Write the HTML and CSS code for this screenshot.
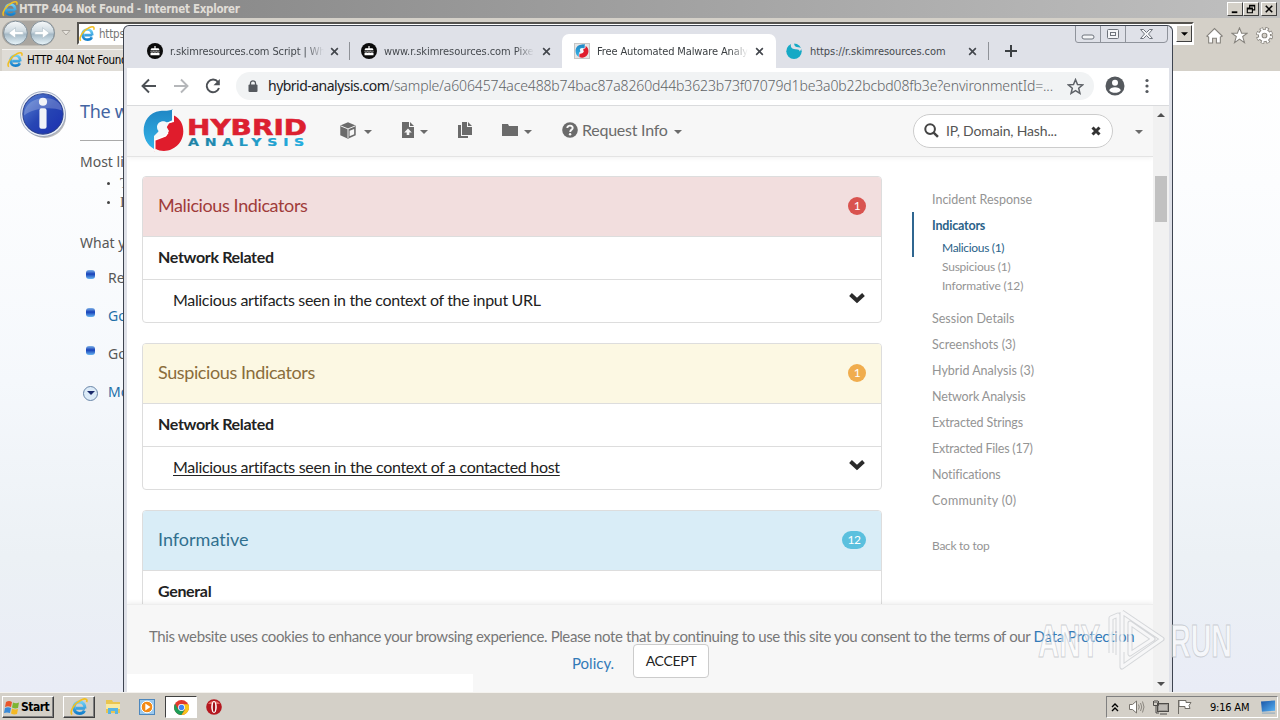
FILE: index.html
```html
<!DOCTYPE html>
<html lang="en">
<head>
<meta charset="utf-8">
<title>Desktop</title>
<link rel="stylesheet" href="styles.css">
</head>
<body>
<svg class="defs" aria-hidden="true">
  <defs>
    <linearGradient id="ieBlue" x1="0" y1="0" x2="0" y2="1"><stop offset="0" stop-color="#6fd0f7"/><stop offset="1" stop-color="#1480cc"/></linearGradient>
    <linearGradient id="orb" x1="0" y1="0" x2="0" y2="1"><stop offset="0" stop-color="#f7f9fa"/><stop offset=".45" stop-color="#cdd9e0"/><stop offset=".55" stop-color="#a5b9c6"/><stop offset="1" stop-color="#eaf6fb"/></linearGradient>
    <linearGradient id="info" x1="0" y1="0" x2="1" y2="1"><stop offset="0" stop-color="#5c86d6"/><stop offset=".5" stop-color="#2746b4"/><stop offset="1" stop-color="#1a2fb0"/></linearGradient>
    <linearGradient id="haBlue" x1="0" y1="0" x2="0" y2="1"><stop offset="0" stop-color="#1f86c4"/><stop offset="1" stop-color="#35b4e8"/></linearGradient>
    <linearGradient id="haText" x1="0" y1="0" x2="1" y2="0"><stop offset="0" stop-color="#1f7fa0"/><stop offset="1" stop-color="#22b4ea"/></linearGradient>
    <linearGradient id="screen" x1="0" y1="0" x2="1" y2="1"><stop offset="0" stop-color="#1753a5"/><stop offset="1" stop-color="#58b2f4"/></linearGradient>
    <symbol id="ie" viewBox="0 0 16 16">
      <path d="M13.3 9.2H5.2M13.3 9.2C13.4 5.700 11.500 3.500 8.500 3.500S3.600 5.800 3.600 8.700s2 5 4.900 5c2.200 0 3.600-.9 4.300-2.500" fill="none" stroke="url(#ieBlue)" stroke-width="2.700"/>
      <path d="M1.800 14.800C-.6 12.200 3.500 4.600 10.400 1.500c3.600-1.500 5.400-.5 4.300 2.200" fill="none" stroke="#f2bf22" stroke-width="1.500"/>
    </symbol>
    <symbol id="cake" viewBox="0 0 16 16">
      <circle cx="8" cy="8" r="8" fill="#0b0b0b"/>
      <path d="M7.400 3h1.200v2.200h2.200q1.500 0 1.500 1.400v.6H3.700v-.6q0-1.400 1.500-1.400h2.200zM3.500 9.700h9v2.600h-9z" fill="#fff"/>
      <path d="M3.500 8.400c1.300.9 2.200.7 3 0 .8.700 2.200.7 3 0 .8.700 1.800.9 3 0" fill="none" stroke="#fff" stroke-width=".7"/>
    </symbol>
    <symbol id="globe" viewBox="0 0 41 43">
      <path d="M29.500.3V12L20 15l-5 8-4 4v13C-5 31-2 4 17 2c5-.6 9 .5 12.500-1.700z" fill="url(#haBlue)"/>
      <path d="M31 6.500C43.500 12 44 33 29 40c-6 3-12 2.300-16.500-.3l-1 3V31L23 27l3-5-4-7 9-2z" fill="#e01c2c"/>
      <path d="M29.800 1v11l-7 3M25 23.500l-2.500 3.500-10.700 4V42" fill="none" stroke="#fff" stroke-width="1.400"/>
      <path d="M22 12.500c-4-1-8 1.500-8 5.500 0 3 1.500 4 3 5l-3 5 8-1.500 3-4-1.500-4 2.500-4z" fill="#f4f8fb"/>
    </symbol>
    <symbol id="x" viewBox="0 0 10 10"><path d="M1.300 1.300l7.400 7.400m0-7.400L1.300 8.700" stroke="#43474d" stroke-width="1.800"/></symbol>
    <symbol id="caret" viewBox="0 0 8 4"><path d="M0 0h8L4 4z" fill="currentColor"/></symbol>
    <symbol id="chev" viewBox="0 0 16 12"><path d="M1.500 2.500L8 8.500l6.500-6" fill="none" stroke="#2b2b2b" stroke-width="4"/></symbol>
  </defs>
</svg>
<div class="desktop">
  <section class="ie">
    <header class="ie-title">
      <svg class="i16"><use href="#ie"/></svg><span class="ie-name">HTTP 404 Not Found - Internet Explorer</span>
      <div class="classic-btns">
        <svg viewBox="0 0 15 13"><path d="M4 10h6" stroke="#000" stroke-width="2"/></svg>
        <svg viewBox="0 0 15 13"><path d="M6 5V2.500h5.500v5H9M3.500 5.500H9v5H3.500zM3.500 6.500H9M6 3.200h5" fill="none" stroke="#000" stroke-width="1.200"/></svg>
        <svg class="gap" viewBox="0 0 15 13"><path d="M4 3l7 7m0-7l-7 7" stroke="#000" stroke-width="1.700"/></svg>
      </div>
    </header>
    <div class="ie-nav">
      <svg class="orbs" viewBox="0 0 58 28"><rect x="1" y="1" width="55" height="26" rx="13" fill="#aaa6a0"/><circle cx="15" cy="14" r="12.300" fill="url(#orb)" stroke="#7f8d96"/><circle cx="43" cy="14" r="12.300" fill="url(#orb)" stroke="#7f8d96"/><path d="M23 12.500h-8V8.500L8 14l7 5.500v-4h8zM35 12.500h8V8.500l7 5.500-7 5.500v-4h-8z" fill="#fff" stroke="#b5c3cc" stroke-width=".7"/></svg>
      <svg class="nav-tri" viewBox="0 0 10 6"><path d="M1 .5h8L5 5z" fill="#e8e5df" stroke="#a9a59e"/></svg>
      <div class="ie-address"><svg class="i16"><use href="#ie"/></svg><span>https://r.skimresources.com</span><b class="drop"><svg class="drop-c"><use href="#caret"/></svg></b></div>
      <div class="ie-tools">
        <svg viewBox="0 0 16 16"><path d="M.8 8.500L8 1.500l7.200 7-1.700 1V15H9.800v-4.500H6.200V15H2.500V9.500z" fill="#fff" stroke="#85827c"/></svg>
        <svg viewBox="0 0 16 16"><path d="M8 .8l2 5h5.300L11 9l1.700 5.700L8 11.400l-4.700 3.300L5 9 .7 5.800H6z" fill="#fff" stroke="#85827c"/></svg>
        <svg viewBox="0 0 16 16"><circle cx="8" cy="8" r="6" fill="none" stroke="#85827c" stroke-width="4" stroke-dasharray="2.900 1.810"/><circle cx="8" cy="8" r="4" fill="none" stroke="#85827c" stroke-width="4.400"/><circle cx="8" cy="8" r="6" fill="none" stroke="#fff" stroke-width="2.600" stroke-dasharray="1.700 3.010" stroke-dashoffset="-.6"/><circle cx="8" cy="8" r="4" fill="none" stroke="#fff" stroke-width="2.600"/></svg>
      </div>
    </div>
    <div class="ie-tabs"><div class="ie-tab"><svg class="i16"><use href="#ie"/></svg><span>HTTP 404 Not Found</span></div></div>
    <main class="ie-page">
      <svg class="info-ic" viewBox="0 0 46 46"><circle cx="24" cy="25" r="21" fill="#bbb"/><circle cx="22.500" cy="22.500" r="22" fill="#eef2f8" stroke="#8b98b4" stroke-width=".8"/><circle cx="22.500" cy="22.500" r="19.700" fill="url(#info)" stroke="#2b418e"/><path d="M4 24C4 2 41 2 41 19 30 15 13 17 4 24z" fill="#fff" opacity=".22"/><circle cx="22.500" cy="10.500" r="4" fill="#f1f3f8"/><rect x="19" y="17" width="7" height="20" rx="2" fill="#f1f3f8"/></svg>
      <div class="err">
        <h1>The webpage cannot be found</h1>
        <p class="p1">Most likely causes:</p>
        <ul class="causes"><li><i></i>There might be a typing error</li><li><i></i>If you clicked on a link</li></ul>
        <p class="p2">What you can try:</p>
        <ul class="tries"><li><i></i>Retype the address.</li><li class="lnk"><i></i>Go back to the previous page.</li><li><i></i>Go to the site</li><li class="lnk more"><b><svg><use href="#caret"/></svg></b>More information</li></ul>
      </div>
    </main>
  </section>

  <section class="chrome">
    <div class="tabs">
      <div class="tab t1"><svg class="i16"><use href="#cake"/></svg><span>r.skimresources.com Script | Wh</span><svg class="x"><use href="#x"/></svg></div>
      <div class="tab t2"><svg class="i16"><use href="#cake"/></svg><span>www.r.skimresources.com Pixel</span><svg class="x"><use href="#x"/></svg></div>
      <div class="tab t3"><svg class="i16 fav"><use href="#globe"/></svg><span>Free Automated Malware Analysis</span><svg class="x"><use href="#x"/></svg></div>
      <div class="tab t4"><svg class="i16" viewBox="0 0 16 16"><circle cx="8" cy="8.300" r="7.700" fill="#16a9c5"/><path d="M5.500 0C3.500 3.500 6 6.300 9.500 6.200c2.500-.1 4 .6 4.300 2.300L16 5 12.500 4.300C9.500 4.300 8 3 8.200 0z" fill="#dfe1e8"/></svg><span>https://r.skimresources.com</span><svg class="x"><use href="#x"/></svg></div>
      <svg class="plus" viewBox="0 0 12 12"><path d="M6 0v12M0 6h12" stroke="#3c4043" stroke-width="2"/></svg>
      <svg class="winbtns" viewBox="0 0 94 18"><path d="M.5 0v14q0 2.500 2.500 2.500h86q3.500 0 3.500-3.500V0M25.500 0v16.500M50.500 0v16.500" fill="none" stroke="#8f939b"/><g fill="#f4f5f7" stroke="#6f747c"><rect x="7" y="9" width="12" height="4" rx="2"/><rect x="32.500" y="3.500" width="11" height="9" rx="1"/><rect x="35.500" y="6.500" width="5" height="3"/><path d="M65.500 3.500h3l3 3 3-3h3L73.500 8l4 4.500h-3l-3-3-3 3h-3l4-4.500z"/></g></svg>
    </div>
    <div class="bar">
      <svg class="nv" viewBox="0 0 16 16"><path d="M15 8H2M8 1.500L1.500 8 8 14.500" fill="none" stroke="#4d5156" stroke-width="1.900"/></svg>
      <svg class="nv" viewBox="0 0 16 16"><path d="M1 8h13M8 1.500L14.500 8 8 14.500" fill="none" stroke="#b5b7ba" stroke-width="1.900"/></svg>
      <svg class="nv" viewBox="0 0 16 16"><path d="M13 4A6.300 6.300 0 1 0 14 10" fill="none" stroke="#4d5156" stroke-width="2"/><path d="M14.800 1v6.300H8.500z" fill="#4d5156"/></svg>
      <div class="omni">
        <svg class="lock" viewBox="0 0 10 12"><rect x=".5" y="4.500" width="9" height="7.500" rx="1" fill="#55595e"/><path d="M2.500 5V3a2.500 2.200 0 0 1 5 0v2" fill="none" stroke="#55595e" stroke-width="1.300"/></svg>
        <span class="url"><b>hybrid-analysis.com</b>/sample/a6064574ace488b74bac87a8260d44b3623b73f07079d1be3a0b22bcbd08fb3e?environmentId=...</span>
        <svg class="star" viewBox="0 0 16 16"><path d="M8 1.500l1.900 4.600 4.900.3L11 9.600l1.200 4.800L8 11.800l-4.200 2.600L5 9.600 1.200 6.400l4.900-.3z" fill="none" stroke="#5f6368" stroke-width="1.400"/></svg>
      </div>
      <svg class="user" viewBox="0 0 20 20"><circle cx="10" cy="10" r="9.500" fill="#55595e"/><circle cx="10" cy="6.800" r="3" fill="#fff"/><path d="M4.200 14.200c1-4 10.600-4 11.600 0-2.500 3.500-9 3.500-11.600 0z" fill="#fff"/></svg>
      <svg class="dots" viewBox="0 0 4 16"><g fill="#55595e"><circle cx="2" cy="2.500" r="1.600"/><circle cx="2" cy="8" r="1.600"/><circle cx="2" cy="13.500" r="1.600"/></g></svg>
    </div>
    <div class="view">
      <div class="site">
        <nav class="nav">
          <svg class="logo" viewBox="0 0 166 44"><svg x="0" y="1" width="41" height="43"><use href="#globe"/></svg><text x="44" y="27" class="hy" textLength="120" lengthAdjust="spacingAndGlyphs">HYBRID</text><text x="45" y="37.500" class="an" fill="url(#haText)" textLength="122" lengthAdjust="spacingAndGlyphs">ANALYSIS</text></svg>
          <svg class="n-box" viewBox="0 0 17 16"><path d="M8.500.3l7.300 2.900v9.300l-7.300 3.200-7.300-3.200V3.200z" fill="#6b6b6b"/><path d="M1.500 3.600l7 2.900 7-2.900M8.500 6.500V15" fill="none" stroke="#f7f7f7" stroke-width=".9"/><path d="M10 8.300l4.300-1.800v5L10 13.500z" fill="#f7f7f7"/></svg>
          <svg class="crt c1"><use href="#caret"/></svg>
          <svg class="n-file" viewBox="0 0 12 16"><path d="M0 0h7v5h5v11H0zM8 0l4 4H8z" fill="#6b6b6b"/><path d="M6 6.500l3.800 4H7.300V13H4.700v-2.500H2.200z" fill="#f7f7f7"/></svg>
          <svg class="crt c2"><use href="#caret"/></svg>
          <svg class="n-copy" viewBox="0 0 14 16"><path d="M4 0h5v5h5v8H4zM10 0l4 4h-4zM0 3h3v11h7v2H0z" fill="#6b6b6b"/></svg>
          <svg class="n-fold" viewBox="0 0 16 12"><path d="M0 0h6l1 2h9v10H0z" fill="#6b6b6b"/></svg>
          <svg class="crt c3"><use href="#caret"/></svg>
          <svg class="n-q" viewBox="0 0 16 16"><circle cx="8" cy="8" r="7.800" fill="#6b6b6b"/><path d="M5.300 6c0-3.400 5.500-3 5.400 0C10.700 7.800 8.200 7.500 8.200 10" fill="none" stroke="#f7f7f7" stroke-width="1.900"/><circle cx="8.100" cy="12.300" r="1.200" fill="#f7f7f7"/></svg>
          <span class="req">Request Info</span>
          <svg class="crt c4"><use href="#caret"/></svg>
          <div class="search"><svg class="mag" viewBox="0 0 14 14"><circle cx="5.700" cy="5.700" r="4.500" fill="none" stroke="#444" stroke-width="1.900"/><path d="M9 9l4 4" stroke="#444" stroke-width="2.300"/></svg><span>IP, Domain, Hash...</span><svg class="clr" viewBox="0 0 10 10"><path d="M1.500 1.500l7 7m0-7l-7 7" stroke="#333" stroke-width="3"/></svg></div>
          <svg class="crt c5"><use href="#caret"/></svg>
        </nav>
        <div class="cols">
          <div class="panels">
            <article class="panel"><h2 class="bad"><span>Malicious Indicators</span><em>1</em></h2><h3>Network Related</h3><p><span>Malicious artifacts seen in the context of the input URL</span><svg class="chev"><use href="#chev"/></svg></p></article>
            <article class="panel"><h2 class="warn"><span>Suspicious Indicators</span><em>1</em></h2><h3>Network Related</h3><p><span class="u">Malicious artifacts seen in the context of a contacted host</span><svg class="chev"><use href="#chev"/></svg></p></article>
            <article class="panel"><h2 class="inf"><span>Informative</span><em>12</em></h2><h3 class="gen">General</h3></article>
          </div>
          <aside class="side">
            <div>Incident Response</div>
            <section><div class="on">Indicators</div><div class="sub on2">Malicious (1)</div></section>
            <div class="sub">Suspicious (1)</div><div class="sub last">Informative (12)</div>
            <div>Session Details</div><div>Screenshots (3)</div><div>Hybrid Analysis (3)</div><div class="tight">Network Analysis</div><div class="tight">Extracted Strings</div><div class="tighter">Extracted Files (17)</div><div class="tight">Notifications</div><div class="wide">Community (0)</div><div class="top">Back to top</div>
          </aside>
        </div>
        <footer class="cookie"><div class="ck1">This website uses cookies to enhance your browsing experience. Please note that by continuing to use this site you consent to the terms of our <a>Data Protection</a></div><div class="ck2"><a>Policy.</a><button>ACCEPT</button></div></footer>
        <div class="status"></div>
      </div>
      <div class="scroll"><svg class="up"><use href="#caret"/></svg><i></i><svg class="dn"><use href="#caret"/></svg></div>
    </div>
  </section>

  <svg class="mark" viewBox="0 0 200 70"><g fill="#fff" fill-opacity=".55" stroke="#aeb2b8" stroke-opacity=".6" stroke-width="1"><text x="2" y="51" textLength="62" lengthAdjust="spacingAndGlyphs">ANY</text><text x="134" y="51" textLength="62" lengthAdjust="spacingAndGlyphs">RUN</text></g><g fill="none" stroke-linejoin="round"><path d="M86 6l40 27-40 28V46M86 6v30M94 17l23 16-23 15zM75 47V12l7-3v40" stroke="#b4b8bd" stroke-opacity=".5" stroke-width="5"/><path d="M86 6l40 27-40 28V46M86 6v30M94 17l23 16-23 15zM75 47V12l7-3v40" stroke="#fff" stroke-opacity=".8" stroke-width="3"/></g></svg>

  <footer class="taskbar">
    <div class="start"><svg viewBox="0 0 16 15"><path d="M2 2q3-2 6 0L7 7Q4 5.500 1 7z" fill="#e9562b"/><path d="M9 2.500q3 1.500 6 0L14 8Q11 9 8 7.500z" fill="#7db532"/><path d="M1 8q3-1.500 6 0l-1 5Q3 12 0 13z" fill="#3a8ad8"/><path d="M8 8.500q3 1.500 6 .5l-1 5q-3 1-6-.5z" fill="#f4b824"/></svg><b>Start</b></div>
    <div class="task raised"><svg class="i18"><use href="#ie"/></svg></div>
    <svg class="t-exp" viewBox="0 0 16 16"><path d="M1 1h6l1 2h7v11H1z" fill="#e9c550"/><path d="M1 5h14v5H1z" fill="#f9eaa0"/><path d="M3 15V9h10v6h-3v-3H6v3z" fill="#58b5e3"/></svg>
    <svg class="t-wmp" viewBox="0 0 16 16"><rect x=".5" y=".5" width="15" height="15" fill="#9cc9ed" stroke="#4d87bd"/><circle cx="8" cy="8" r="5.800" fill="#f38a16" stroke="#fff"/><path d="M6.300 4.500v7L11.500 8z" fill="#fff"/></svg>
    <div class="task pressed"><svg class="i14" viewBox="0 0 14 14"><circle cx="7" cy="7" r="7" fill="#e2392d"/><path d="M1 3.500A7 7 0 0 0 7 14l3-5.200H4z" fill="#1d9d57"/><path d="M7 4h6.400A7 7 0 0 1 7 14l3.300-5z" fill="#f8c51c"/><circle cx="7" cy="7" r="3.200" fill="#fff"/><circle cx="7" cy="7" r="2.500" fill="#4285f4"/></svg></div>
    <svg class="t-op" viewBox="0 0 16 16"><circle cx="8" cy="8" r="7.800" fill="#b51820"/><path d="M2 5a7 6 0 0 1 12 0z" fill="#e66a64"/><ellipse cx="8" cy="8" rx="2.800" ry="6" fill="#fff"/><ellipse cx="8" cy="8" rx="1.200" ry="5" fill="#a01018"/></svg>
    <div class="tray">
      <svg class="y1" viewBox="0 0 8 9"><path d="M1 4l3-3 3 3M1 8l3-3 3 3" fill="none" stroke="#000" stroke-width="1.400"/></svg>
      <svg class="y2" viewBox="0 0 16 14"><path d="M1 4.500h3L8 1v12L4 9.500H1z" fill="#fff" stroke="#77736c"/><path d="M10 4.500q1.500 2.500 0 5M12 3q2.500 4 0 8M14 1.500q3 5.500 0 11" fill="none" stroke="#8a867f"/></svg>
      <svg class="y3" viewBox="0 0 16 15"><rect x="4.500" y="3.500" width="11" height="8" fill="#9a9792" stroke="#4d4b48"/><path d="M6 5h8v5H6z" fill="#bdbab5"/><path d="M.5 1v4.500h5V1M3 5.500V13h3M2 0v3M4 0v3M7 14h7" fill="none" stroke="#4d4b48"/></svg>
      <svg class="y4" viewBox="0 0 16 16"><path d="M1.500 1v14M2 1.500h7v2h5l-2 3 1 3H8v-2H2z" fill="#fff" stroke="#706d67"/></svg>
      <span>9:16 AM</span>
      <svg class="y5" viewBox="0 0 16 14"><path d="M0 1l15-1v11L1 12z" fill="url(#screen)"/><path d="M1 13.500h14" stroke="#87a4bd"/></svg>
    </div>
  </footer>
</div>
</body>
</html>
```
FILE: styles.css
```css
* { box-sizing: border-box; }
body { margin: 0; width: 1280px; height: 720px; overflow: hidden; font-family: "Noto Sans", sans-serif; }
svg { display: block; flex: none; }
ul, p, h1, h2, h3 { margin: 0; padding: 0; font-weight: 400; list-style: none; }
.defs { position: absolute; width: 0; height: 0; }
.desktop { position: relative; width: 1280px; height: 720px; display: flex; flex-direction: column; overflow: hidden; }
.i16 { width: 16px; height: 16px; }
.i18 { width: 18px; height: 18px; }
.i14 { width: 15px; height: 15px; }

/* background browser */
.ie { height: 692px; background: #d4d0c8; display: flex; flex-direction: column; overflow: hidden; }
.ie-title { height: 18px; flex: none; display: flex; align-items: center; padding: 0 3px 0 2px; background: linear-gradient(90deg, #808080, #c0c0c0); font: bold 11.500px "DejaVu Sans Condensed", "DejaVu Sans", sans-serif; font-stretch: condensed; color: #e0ddd7; white-space: nowrap; }
.ie-name { margin-left: 1px; letter-spacing: -.28px; }
.classic-btns { margin-left: auto; display: flex; }
.classic-btns svg { width: 16px; height: 14px; background: #d4d0c8; border: 1px solid; border-color: #fff #404040 #404040 #fff; }
.classic-btns .gap { margin-left: 2px; }
.ie-nav { height: 30px; flex: none; display: flex; align-items: center; }
.orbs { width: 56px; height: 28px; margin: 0 0 0 1px; }
.nav-tri { width: 10px; height: 6px; margin-left: 4px; }
.ie-address { margin-left: 6px; align-self: flex-start; margin-top: 4px; width: 1117px; height: 23px; border: 2px solid #55534f; border-right-color: #fff; border-bottom-color: #fff; background: #fff; display: flex; align-items: center; gap: 4px; padding-left: 0; font: 11.500px "DejaVu Sans Condensed", sans-serif; letter-spacing: -.2px; color: #777; }
.drop { margin-left: auto; width: 16px; height: 17px; background: #d4d0c8; border: 1px solid; border-color: #fff #404040 #404040 #fff; display: flex; align-items: center; justify-content: center; color: #000; }
.drop-c { width: 7px; height: 4px; }
.ie-tools { margin-left: 12px; padding-top: 4px; display: flex; gap: 8px; }
.ie-tools svg { width: 17px; height: 17px; }
.ie-tabs { height: 23px; flex: none; display: flex; padding: 1px 2px 0; }
.ie-tab { width: 210px; background: #dfdcd6; display: flex; align-items: center; gap: 4px; padding: 0 0 2px 5px; font: 11.500px "DejaVu Sans Condensed", sans-serif; letter-spacing: -.3px; border-top: 1px solid #f4f3f0; }
.ie-page { flex: 1; display: flex; padding: 20px 0 0 20px; background: linear-gradient(180deg, #fff 0%, #fcfdfe 18%, #f5f8fc 50%, #ecf1f5 78%, #e9ecf6 100%); }
.info-ic { width: 47px; height: 47px; }
.err { width: 420px; margin-left: 13px; color: #575757; font-size: 14px; white-space: nowrap; }
.err h1 { height: 50px; border-bottom: 1px solid #aaa; color: #4465a2; font-size: 18px; line-height: 40px; letter-spacing: -.3px; }
.p1 { margin-top: 11px; line-height: 20px; }
.causes { margin: 2px 0 0 27px; font: 14px/19px "Liberation Serif", serif; }
.causes li { display: flex; align-items: center; }
.causes i { width: 3px; height: 3px; border-radius: 50%; background: #444; margin-right: 10px; }
.p2 { margin-top: 21px; line-height: 20px; }
.tries { margin: 6px 0 0 5px; }
.tries li { height: 38px; display: flex; align-items: center; padding-bottom: 2px; }
.tries i { width: 9px; height: 9px; border-radius: 3px; margin: -6px 13px 0 1px; background: linear-gradient(#7eb2e8, #1640b8 45%, #69b6f1); }
.lnk { color: #1f6fa8; }
.more b { width: 15px; height: 15px; border: 1px solid #6a86a8; border-radius: 50%; background: #dcebf8; color: #1a2a6b; display: flex; align-items: center; justify-content: center; margin: 4px 10px 0 -2px; }
.more b svg { width: 8px; height: 4px; }

/* foreground browser window */
.chrome { position: absolute; left: 123px; top: 25px; width: 1050px; height: 667px; border: 1px solid #3e4450; border-bottom: 0; border-radius: 6px 6px 0 0; background: #dfe1e8; padding: 0 3px; display: flex; flex-direction: column; overflow: hidden; }
.tabs { position: relative; height: 42px; flex: none; display: flex; align-items: flex-end; color: #45494e; font: 11px "DejaVu Sans Condensed", sans-serif; }
.tab { height: 34px; display: flex; align-items: center; white-space: nowrap; }
.tab span { margin-left: 7px; overflow: hidden; letter-spacing: -.06px; -webkit-mask-image: linear-gradient(90deg, #000 88%, transparent); mask-image: linear-gradient(90deg, #000 88%, transparent); }
.x { width: 9px; height: 9px; margin-left: auto; }
.t1 { width: 223px; padding: 0 11px 0 20px; position: relative; }
.tab.t1 span { width: 154px; letter-spacing: -.12px; }
.t1::after, .t4::after { content: ""; position: absolute; right: 0; top: 8px; width: 1px; height: 18px; background: #8f9298; }
.t2 { width: 212px; padding: 0 11px 0 11px; }
.t2 span { width: 150px; }
.t3 { width: 214px; padding: 0 12px 0 12px; background: #fff; border-radius: 7px 7px 0 0; color: #3c4043; }
.tab.t3 span { width: 151px; letter-spacing: -.12px; }
.fav { border: 1px solid #c5c5c5; background: #e5e5e5; }
.t4 { width: 213px; padding: 0 12px 0 10px; position: relative; }
.tab.t4 span { width: 150px; margin-left: 8px; -webkit-mask-image: none; mask-image: none; }
.plus { width: 12px; height: 12px; margin: 0 0 11px 16px; }
.winbtns { position: absolute; right: 0; top: 0; width: 94px; height: 18px; }
.bar { height: 38px; flex: none; background: #fff; border-bottom: 1px solid #dadbdd; display: flex; align-items: center; padding: 0 0 1px 14px; }
.nv { width: 16px; height: 16px; margin-right: 16px; }
.omni { width: 858px; height: 28px; margin-left: -1px; border-radius: 14px; background: #f1f3f4; display: flex; align-items: center; padding: 0 10px 0 12px; }
.lock { width: 10px; height: 12px; }
.url { margin-left: 10px; padding-bottom: 1px; font: 300 14px "Noto Sans", sans-serif; color: #5f6367; letter-spacing: -.13px; white-space: nowrap; }
.url b { font-weight: 400; color: #202124; letter-spacing: -.52px; }
.star { width: 17px; height: 17px; margin-left: auto; }
.user { width: 20px; height: 20px; margin-left: 11px; }
.dots { width: 4px; height: 16px; margin-left: 20px; }
.view { flex: 1; min-height: 0; display: flex; background: #fff; }
.site { position: relative; width: 1026px; overflow: hidden; font-family: Lato, sans-serif; font-variant-ligatures: none; }
.scroll { flex: 1; background: #f1f1f1; display: flex; flex-direction: column; align-items: center; color: #505050; padding: 7px 0 6px; }
.scroll i { width: 12px; height: 46px; background: #c1c1c1; margin-top: 59px; }
.scroll svg { width: 8px; height: 4px; }
.up { transform: rotate(180deg); }
.scroll .dn { margin-top: auto; }
.nav { height: 51px; background: #f7f7f7; border-bottom: 1px solid #e4e4e4; box-shadow: 0 1px 5px rgba(0,0,0,.06); display: flex; align-items: center; padding: 0 0 2px 16px; color: #6b6b6b; }
.logo { width: 166px; height: 44px; }
.hy { font: bold 20.500px "DejaVu Sans", sans-serif; fill: #dc2030; stroke: #dc2030; stroke-width: .5px; }
.an { font: bold 10px "DejaVu Sans", sans-serif; letter-spacing: 4px; stroke: #2193bf; stroke-width: .2px; }
.n-box { width: 18px; height: 17px; margin-left: 30px; }
.crt { width: 8px; height: 4px; margin-top: 3px; }
.c1 { margin-left: 7px; }
.n-file { width: 12px; height: 16px; margin-left: 30px; }
.c2 { margin-left: 6px; }
.n-copy { width: 14px; height: 16px; margin-left: 30px; }
.n-fold { width: 16px; height: 12px; margin-left: 30px; }
.c3 { margin-left: 6px; }
.n-q { width: 16px; height: 16px; margin-left: 30px; }
.req { margin-left: 4px; font-size: 16px; width: 86px; padding-bottom: 1px; white-space: nowrap; letter-spacing: -.25px; }
.c4 { margin-left: 6px; }
.search { width: 200px; height: 34px; margin: 2px 0 0 231px; border: 1px solid #ccc; border-radius: 17px; background: #fff; display: flex; align-items: center; padding: 0 11px 1px 10px; font-size: 14px; letter-spacing: -.16px; color: #555; }
.mag { width: 15px; height: 15px; margin-right: 7px; }
.clr { width: 10px; height: 10px; margin-left: auto; }
.c5 { margin-left: 22px; }
.cols { display: flex; padding: 19px 0 0 15px; }
.panels { width: 740px; }
.panel { border: 1px solid #ddd; border-radius: 4px; margin-bottom: 20px; overflow: hidden; height: 147px; color: #222; }
.panel h2 { height: 60px; border-bottom: 1px solid #ddd; display: flex; align-items: center; justify-content: space-between; padding: 0 15px 2px; font-size: 18px; letter-spacing: -.39px; }
.panel h2 span { padding-bottom: 1px; }
.panel .inf span { letter-spacing: 0; }
.bad { background: #f2dede; color: #a03c3a; }
.warn { background: #fcf8e3; color: #8a6d3b; }
.inf { background: #d9edf7; color: #31708f; }
.panel em { font: 12px/18px Lato, sans-serif; color: #fff; border-radius: 9px; min-width: 18px; text-align: center; letter-spacing: -.5px; }
.bad em { background: #d9534f; }
.warn em { background: #f0ad4e; }
.inf em { background: #5bc0de; min-width: 24px; }
.panel h3 { height: 43px; padding-left: 15px; border-bottom: 1px solid #ddd; font-size: 16px; font-weight: 700; line-height: 39px; letter-spacing: -.33px; }
.panel p { height: 42px; padding: 0 16px 3px 30px; display: flex; align-items: center; justify-content: space-between; font-size: 16px; letter-spacing: -.33px; }
.panel .u { text-decoration: underline; text-underline-offset: 2px; letter-spacing: -.31px; }
.chev { width: 16px; height: 12px; margin-top: -3px; }
.side { margin-left: 30px; padding-top: 11px; font-size: 12.500px; color: #949494; line-height: 26px; white-space: nowrap; }
.side > div { padding-left: 20px; }
.side section { border-left: 2px solid #2f6690; height: 45px; margin-top: -1px; }
.side .on { padding-left: 18px; font-weight: 700; color: #2b6289; line-height: 27px; letter-spacing: -.2px; }
.side .sub { font-size: 12px; line-height: 19px; padding-left: 30px; letter-spacing: -.22px; }
.side .on2 { padding-left: 28px; color: #2b6289; line-height: 17px; letter-spacing: -.32px; }
.side .last { margin-bottom: 11px; letter-spacing: -.16px; }
.side .tight { letter-spacing: -.13px; }
.side .tighter { letter-spacing: -.23px; }
.side .wide { letter-spacing: .3px; }
.side .top { margin-top: 19px; font-size: 12px; letter-spacing: -.28px; }
.cookie { position: absolute; left: 0; right: 0; bottom: 0; height: 88px; background: #f7f7f7; border-top: 1px solid #eee; box-shadow: 0 -1px 5px rgba(0,0,0,.08); font-size: 15px; color: #777; letter-spacing: -.38px; white-space: nowrap; }
.cookie a { color: #337ab7; }
.ck1 a { letter-spacing: -.2px; }
.ck1 { padding: 20px 0 0 22px; line-height: 22px; }
.ck2 { display: flex; padding-left: 445px; align-items: center; margin-top: -3px; }
.ck2 a { width: 61px; padding-top: 4px; letter-spacing: 0; }
.cookie button { width: 76px; height: 34px; padding: 0 0 1px; border: 1px solid #ccc; border-radius: 4px; background: #fff; font: 14px Lato, sans-serif; letter-spacing: -.3px; color: #222; }
.status { position: absolute; left: 0; bottom: 0; width: 346px; height: 18px; background: #fff; }

/* watermark */
.mark { position: absolute; left: 1036px; top: 606px; width: 200px; height: 70px; font: bold 46px "Liberation Sans", sans-serif; }

/* taskbar */
.taskbar { height: 28px; background: #d4d0c8; border-top: 1px solid #f4f2ee; display: flex; align-items: center; padding: 1px 2px 0; }
.start, .raised { border: 1px solid; border-color: #fff #404040 #404040 #fff; box-shadow: inset -1px -1px #808080; }
.start { width: 52px; height: 22px; display: flex; align-items: center; gap: 1px; padding-left: 1px; font: bold 12px "DejaVu Sans Condensed", sans-serif; letter-spacing: -.5px; }
.start svg { width: 16px; height: 15px; }
.task { width: 32px; height: 22px; display: flex; align-items: center; justify-content: center; }
.raised { margin-left: 9px; }
.t-exp { width: 16px; height: 16px; margin-left: 10px; }
.t-wmp { width: 16px; height: 16px; margin-left: 18px; }
.pressed { margin-left: 10px; background: #fff; border: 1px solid; border-color: #404040 #fff #fff #404040; }
.t-op { width: 16px; height: 16px; margin-left: 9px; }
.tray { margin-left: auto; width: 172px; height: 22px; border: 1px solid; border-color: #808080 #fff #fff #808080; display: flex; align-items: center; font: 11px "DejaVu Sans Condensed", sans-serif; padding-left: 4px; }
.y1 { width: 8px; height: 9px; }
.y2 { width: 17px; height: 14px; margin-left: 9px; }
.y3 { width: 16px; height: 15px; margin-left: 8px; }
.y4 { width: 16px; height: 16px; margin-left: 8px; }
.tray span { width: 41px; margin-left: 17px; letter-spacing: -.2px; white-space: nowrap; }
.y5 { width: 15px; height: 14px; margin-left: 10px; }
```
